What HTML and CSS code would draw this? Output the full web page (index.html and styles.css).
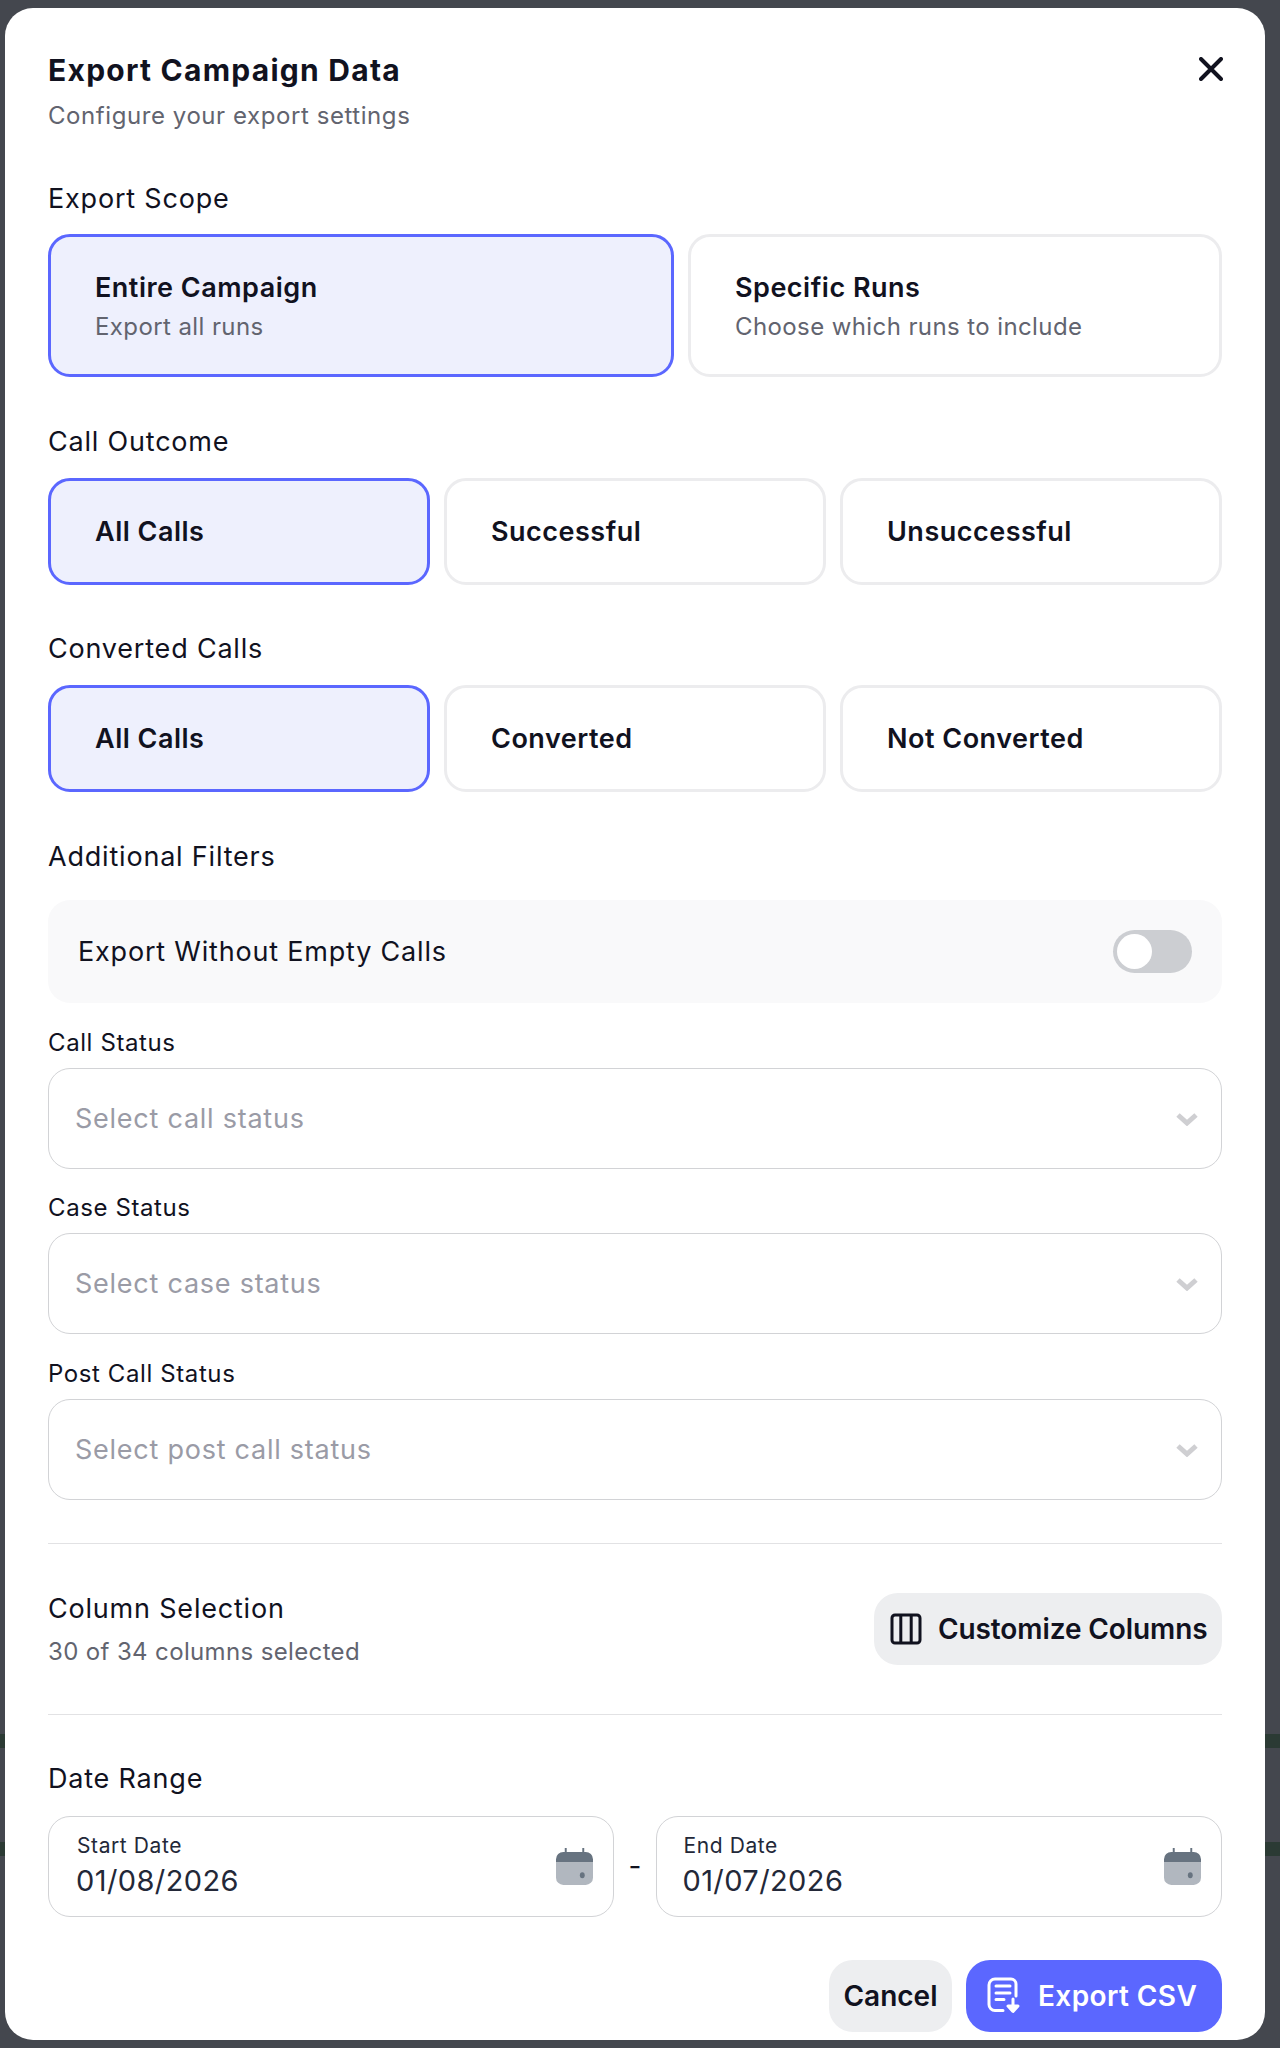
FILE: index.html
```html
<!DOCTYPE html>
<html lang="en">

<head>
    <meta charset="UTF-8">
    <title>Export Campaign Data</title>
    <link rel="stylesheet" href="styles.css">
</head>

<body>
    <div class="backdrop-band band-one"></div>
    <div class="backdrop-band band-two"></div>
    <div class="modal">
        <div class="modal-head">
            <div>
                <h1 class="modal-title">Export Campaign Data</h1>
                <p class="modal-sub">Configure your export settings</p>
            </div>
            <button class="close-btn">
                <svg width="24" height="24" viewBox="0 0 24 24"><path d="M2 2 L22 22 M22 2 L2 22" /></svg>
            </button>
        </div>

        <div class="section scope-section">
            <div class="section-label">Export Scope</div>
            <div class="scope-grid">
                <div class="option option-tall active">
                    <div class="option-name">Entire Campaign</div>
                    <div class="option-desc">Export all runs</div>
                </div>
                <div class="option option-tall">
                    <div class="option-name">Specific Runs</div>
                    <div class="option-desc">Choose which runs to include</div>
                </div>
            </div>
        </div>

        <div class="section">
            <div class="section-label">Call Outcome</div>
            <div class="three-grid">
                <div class="option active"><div class="option-name">All Calls</div></div>
                <div class="option"><div class="option-name">Successful</div></div>
                <div class="option"><div class="option-name">Unsuccessful</div></div>
            </div>
        </div>

        <div class="section converted-section">
            <div class="section-label">Converted Calls</div>
            <div class="three-grid">
                <div class="option active"><div class="option-name">All Calls</div></div>
                <div class="option"><div class="option-name">Converted</div></div>
                <div class="option"><div class="option-name">Not Converted</div></div>
            </div>
        </div>

        <div class="section">
            <div class="section-label">Additional Filters</div>
            <div class="toggle-row">
                <span>Export Without Empty Calls</span>
                <div class="toggle"><div class="toggle-knob"></div></div>
            </div>
        </div>

        <div class="field first-field">
            <div class="field-label">Call Status</div>
            <div class="select">
                <span>Select call status</span>
                <svg width="24" height="14" viewBox="0 0 24 14"><path d="M3 3 L12 11 L21 3" /></svg>
            </div>
        </div>
        <div class="field">
            <div class="field-label">Case Status</div>
            <div class="select">
                <span>Select case status</span>
                <svg width="24" height="14" viewBox="0 0 24 14"><path d="M3 3 L12 11 L21 3" /></svg>
            </div>
        </div>
        <div class="field last-field">
            <div class="field-label">Post Call Status</div>
            <div class="select">
                <span>Select post call status</span>
                <svg width="24" height="14" viewBox="0 0 24 14"><path d="M3 3 L12 11 L21 3" /></svg>
            </div>
        </div>

        <div class="column-row">
            <div>
                <div class="section-label">Column Selection</div>
                <div class="column-count">30 of 34 columns selected</div>
            </div>
            <button class="grey-btn columns-btn">
                <svg width="32" height="32" viewBox="0 0 32 32" class="columns-icon">
                    <rect x="2" y="2" width="28" height="28" rx="3" />
                    <path d="M10.800 2 V30 M21.200 2 V30" />
                </svg>
                Customize Columns
            </button>
        </div>

        <div class="date-section">
            <div class="section-label">Date Range</div>
            <div class="date-row">
                <div class="date-field">
                    <div>
                        <div class="date-label">Start Date</div>
                        <div class="date-value">01/08/2026</div>
                    </div>
                    <svg class="calendar" width="37" height="37" viewBox="0 0 38 38">
                        <path class="cal-top" d="M9 0 h2 v4 h16 v-4 h2 v4 h1.500 a7.500 7.500 0 0 1 7.500 7.500 v3.500 h-38 v-3.500 a7.500 7.500 0 0 1 7.500 -7.500 h1.500 z" />
                        <path class="cal-body" d="M0 15.500 h38 v15 a7.500 7.500 0 0 1 -7.500 7.500 h-23 a7.500 7.500 0 0 1 -7.500 -7.500 z" />
                        <ellipse class="cal-top" cx="27" cy="28" rx="2.500" ry="3" />
                    </svg>
                </div>
                <div class="date-dash">-</div>
                <div class="date-field end-date">
                    <div>
                        <div class="date-label">End Date</div>
                        <div class="date-value">01/07/2026</div>
                    </div>
                    <svg class="calendar" width="37" height="37" viewBox="0 0 38 38">
                        <path class="cal-top" d="M9 0 h2 v4 h16 v-4 h2 v4 h1.500 a7.500 7.500 0 0 1 7.500 7.500 v3.500 h-38 v-3.500 a7.500 7.500 0 0 1 7.500 -7.500 h1.500 z" />
                        <path class="cal-body" d="M0 15.500 h38 v15 a7.500 7.500 0 0 1 -7.500 7.500 h-23 a7.500 7.500 0 0 1 -7.500 -7.500 z" />
                        <ellipse class="cal-top" cx="27" cy="28" rx="2.500" ry="3" />
                    </svg>
                </div>
            </div>
        </div>

        <div class="modal-foot">
            <button class="grey-btn cancel-btn">Cancel</button>
            <button class="primary-btn">
                <svg width="36" height="40" viewBox="0 0 36 40" class="export-icon">
                    <path d="M17 34.500 H9 a6 6 0 0 1 -6 -6 V9 a6 6 0 0 1 6 -6 H25 a5 5 0 0 1 5 5 V20" />
                    <path d="M10 10 H24 M10 17 H24 M10 23.500 H18" />
                    <path class="arrow" d="M27 23 V30 M22 30 H32 L27 35.500 Z" />
                </svg>
                Export CSV
            </button>
        </div>
    </div>
</body>

</html>
```

FILE: styles.css
```css
* {
    box-sizing: border-box;
}

html,
body {
    margin: 0;
    height: 2048px;
    overflow: hidden;
}

body {
    background-color: #44474e;
    font-family: Inter, "Liberation Sans", sans-serif;
    color: #11121f;
    padding: 8px 15px 8px 5px;
}

.backdrop-band {
    position: absolute;
    left: 0;
    width: 1280px;
    height: 14px;
    background-color: #2b3a34;
}

.band-one {
    top: 1734px;
}

.band-two {
    top: 1842px;
}

.modal {
    position: relative;
    width: 1260px;
    height: 2032px;
    background-color: #fff;
    border-radius: 28px;
    padding: 45px 43px 9px 43px;
}

.modal-head {
    display: flex;
    justify-content: space-between;
    align-items: flex-start;
}

.modal-title {
    margin: 0;
    font-size: 30px;
    line-height: 34px;
    font-weight: 700;
    letter-spacing: 1.250px;
}

.modal-sub {
    margin: 15px 0 0;
    font-size: 24px;
    line-height: 28px;
    letter-spacing: 0.57px;
    color: #62646f;
}

.close-btn {
    background: none;
    border: none;
    padding: 0;
    margin: 4px -1px 0 0;
    display: flex;
}

.close-btn path {
    fill: none;
    stroke: #11121f;
    stroke-width: 4;
    stroke-linecap: round;
}

.section {
    margin-top: 49px;
}

.scope-section {
    margin-top: 53px;
}

.converted-section {
    margin-top: 48px;
}

.section-label {
    font-size: 27px;
    line-height: 32px;
    letter-spacing: 0.8px;
    color: #11121f;
}

.scope-grid,
.three-grid {
    display: grid;
    gap: 14px;
    margin-top: 20px;
}

.scope-grid {
    margin-top: 19px;
    grid-template-columns: 626px 1fr;
}

.three-grid {
    grid-template-columns: 1fr 1fr 1fr;
}

.option {
    height: 107px;
    padding: 1px 44px 0;
    border: 3px solid #ececee;
    border-radius: 22px;
    display: flex;
    flex-direction: column;
    justify-content: center;
}

.option-tall {
    height: 143px;
}

.option.active {
    background-color: #eef0fd;
    border-color: #5b67ff;
}

.option-name {
    font-size: 27px;
    line-height: 34px;
    font-weight: 600;
    letter-spacing: 0.5px;
}

.option-desc {
    margin-top: 7px;
    font-size: 24px;
    line-height: 30px;
    letter-spacing: 0.4px;
    color: #62646f;
}

.toggle-row {
    height: 103px;
    margin-top: 27px;
    padding: 0 30px;
    background-color: #f9f9fa;
    border-radius: 22px;
    display: flex;
    justify-content: space-between;
    align-items: center;
    font-size: 27px;
    letter-spacing: 0.8px;
}

.toggle {
    width: 79px;
    height: 43px;
    border-radius: 22px;
    background-color: #ccced2;
    padding: 4px;
}

.toggle-knob {
    width: 35px;
    height: 35px;
    border-radius: 50%;
    background-color: #fff;
}

.field {
    margin-top: 25px;
}

.first-field {
    margin-top: 26px;
}

.last-field {
    margin-top: 26px;
}

.field-label {
    font-size: 24px;
    line-height: 28px;
    letter-spacing: 0.6px;
    margin-bottom: 11px;
}

.select {
    height: 101px;
    padding: 0 22px 0 26px;
    border: 1.500px solid #d2d3d6;
    border-radius: 22px;
    display: flex;
    justify-content: space-between;
    align-items: center;
    font-size: 27px;
    letter-spacing: 0.75px;
    color: #9a9ba6;
}

.select path {
    fill: none;
    stroke: #cfcfd2;
    stroke-width: 5;
}

.column-row {
    margin-top: 43px;
    padding-top: 48.500px;
    padding-bottom: 46px;
    border-top: 1.500px solid #e2e2e4;
    border-bottom: 1.500px solid #e2e2e4;
    display: flex;
    justify-content: space-between;
    align-items: center;
}

.column-count {
    margin-top: 12px;
    font-size: 24px;
    line-height: 30px;
    letter-spacing: 0.36px;
    color: #62646f;
}

.grey-btn {
    border: none;
    background-color: #edeef0;
    border-radius: 24px;
    height: 72px;
    font-family: inherit;
    font-size: 28px;
    font-weight: 600;
    color: #11121f;
    display: flex;
    align-items: center;
    white-space: nowrap;
}

.columns-btn {
    width: 348px;
    margin-bottom: 3px;
    padding: 0 0 0 16px;
    gap: 16px;
    letter-spacing: -0.1px;
}

.columns-icon rect,
.columns-icon path {
    fill: none;
    stroke: #11121f;
    stroke-width: 3;
}

.date-section {
    margin-top: 48px;
}

.date-row {
    margin-top: 21px;
    display: flex;
    align-items: center;
    justify-content: space-between;
}

.date-field {
    width: 565.500px;
    height: 101px;
    padding: 0 20px 0 27px;
    border: 1.500px solid #d2d3d6;
    border-radius: 22px;
    display: flex;
    justify-content: space-between;
    align-items: center;
    color: #232838;
}

.end-date {
    padding-left: 25px;
}

.date-label {
    font-size: 21px;
    line-height: 26px;
    letter-spacing: 0.6px;
    margin-left: 1px;
}

.date-value {
    margin-top: 3px;
    font-size: 29px;
    line-height: 38px;
    letter-spacing: 0.4px;
}

.date-dash {
    font-size: 28px;
    color: #11121f;
}

.cal-top {
    fill: #677380;
}

.cal-body {
    fill: #b1b7bf;
}

.modal-foot {
    margin-top: 43px;
    display: flex;
    justify-content: flex-end;
    gap: 14px;
}

.cancel-btn {
    width: 123px;
    justify-content: center;
}

.primary-btn {
    width: 256px;
    height: 72px;
    border: none;
    border-radius: 24px;
    background-color: #5b67ff;
    color: #fff;
    font-family: inherit;
    font-size: 28px;
    font-weight: 600;
    letter-spacing: 0.4px;
    padding: 0 0 0 20px;
    display: flex;
    align-items: center;
    gap: 16px;
}

.export-icon path {
    fill: none;
    stroke: #fff;
    stroke-width: 3;
    stroke-linecap: round;
    stroke-linejoin: round;
}

.export-icon .arrow {
    fill: #fff;
}
```
